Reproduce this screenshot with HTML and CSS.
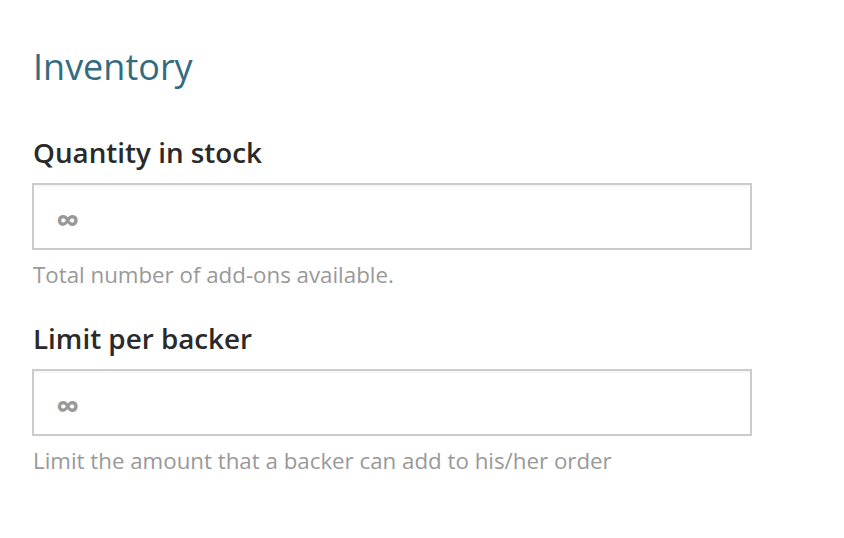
FILE: index.html
```html
<!DOCTYPE html>
<html>
<head>
<meta charset="utf-8">
<link rel="stylesheet" href="styles.css">
</head>
<body>
<div class="panel">
  <h2 class="title">Inventory</h2>
  <div class="field">
    <label class="label">Quantity in stock</label>
    <input class="input" type="text" placeholder="∞">
    <p class="help">Total number of add-ons available.</p>
  </div>
  <div class="field">
    <label class="label">Limit per backer</label>
    <input class="input" type="text" placeholder="∞">
    <p class="help">Limit the amount that a backer can add to his/her order</p>
  </div>
</div>
</body>
</html>
```
FILE: styles.css
```css
html, body {
  margin: 0;
  padding: 0;
  background: #fff;
}
body {
  font-family: "Open Sans", "Liberation Sans", sans-serif;
}
.panel {
  padding: 43px 0 0 33px;
  width: 719px;
}
.title {
  margin: 0 0 43px;
  font-size: 36px;
  font-weight: 400;
  line-height: 48px;
  color: #336b80;
}
.field {
  display: flex;
  flex-direction: column;
  margin-bottom: 30px;
}
.label {
  font-size: 27.8px;
  font-weight: 600;
  line-height: 36px;
  color: #2a2a2a;
  margin-bottom: 13px;
}
.input {
  box-sizing: border-box;
  height: 67px;
  margin-left: -1px;
  width: 720px;
  border: 2px solid #cccccc;
  border-radius: 0;
  box-shadow: inset 0 2px 2px rgba(0,0,0,0.04);
  padding: 6px 22px 0;
  font-family: inherit;
  font-size: 33px;
  font-weight: 700;
  color: #333;
  outline: none;
}
.input::placeholder {
  color: #999;
}
.help {
  margin: 10px 0 0;
  font-size: 22.3px;
  line-height: 30px;
  color: #999;
}
```
